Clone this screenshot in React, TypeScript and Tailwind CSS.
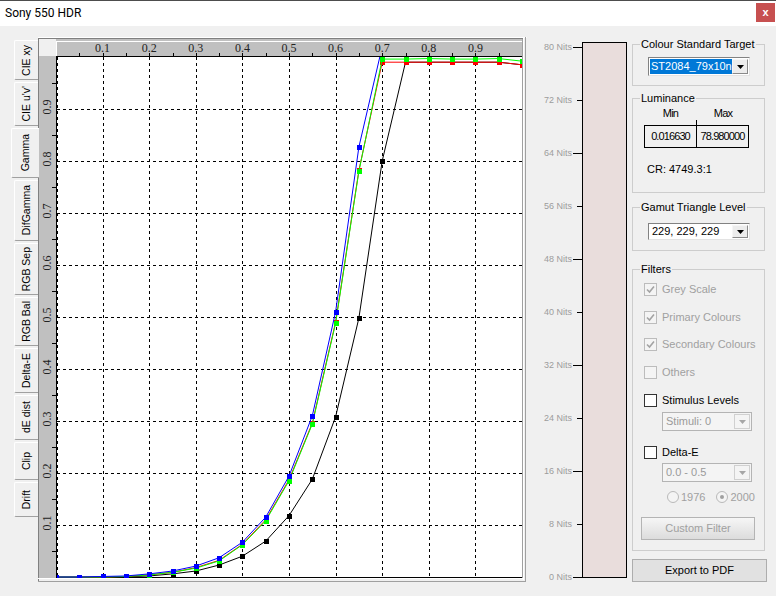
import React from "react";

// Gamma tab of the HDR profiling window

const XS = Array.from({ length: 21 }, (_, i) => i * 0.05);

const BLACK = [0, 0, 0, 0.0005, 0.002, 0.006, 0.0115, 0.023, 0.04, 0.069, 0.118, 0.188, 0.308, 0.498, 0.8, 0.99, 0.99, 0.99, 0.99, 0.99, 0.985];
const RED = [0, 0, 0, 0.001, 0.004, 0.009, 0.018, 0.032, 0.063, 0.11, 0.187, 0.296, 0.49, 0.782, 0.99, 0.99, 0.99, 0.99, 0.99, 0.99, 0.985];
const GREEN = [0, 0, 0, 0.001, 0.004, 0.009, 0.017, 0.031, 0.062, 0.108, 0.185, 0.294, 0.488, 0.78, 0.996, 0.996, 0.997, 0.996, 0.996, 0.997, 0.992];
const BLUE = [0, 0, 0.001, 0.002, 0.006, 0.0115, 0.021, 0.037, 0.067, 0.115, 0.194, 0.31, 0.51, 0.827, 1.02, 1.02, 1.02, 1.02, 1.02, 1.02, 1.02];

const SERIES = [
  { color: "#000000", ys: BLACK },
  { color: "#ff0000", ys: RED },
  { color: "#00ff00", ys: GREEN },
  { color: "#0000ff", ys: BLUE },
];

const MAJORS = [0.1, 0.2, 0.3, 0.4, 0.5, 0.6, 0.7, 0.8, 0.9];
const MINORS = [0.05, 0.15, 0.25, 0.35, 0.45, 0.55, 0.65, 0.75, 0.85, 0.95];

const px = (v: number) => 56 + v * 466;
const py = (v: number) => 577 - v * 520;
const crisp = (n: number) => Math.round(n) + 0.5;

const TABS = [
  { label: "CIE xy", cls: "h-[40px]" },
  { label: "CIE u'v'", cls: "h-[44px]" },
  { label: "Gamma", cls: "h-[50px]", active: true },
  { label: "DifGamma", cls: "h-[61px]" },
  { label: "RGB Sep", cls: "h-[52px]" },
  { label: "RGB Bal", cls: "h-[49px]" },
  { label: "Delta-E", cls: "h-[45px]" },
  { label: "dE dist", cls: "h-[45px]" },
  { label: "Clip", cls: "h-[38px]" },
  { label: "Drift", cls: "h-[35px]" },
];

const NITS = [80, 72, 64, 56, 48, 40, 32, 24, 16, 8, 0];

function Chart() {
  return (
    <svg width={489} height={546} viewBox="38 37 489 546" className="block shrink-0">
      <defs>
        <clipPath id="plot">
          <rect x={57} y={57} width={465} height={521} />
        </clipPath>
      </defs>

      {/* frame + axis bands */}
      <line x1={38} y1={37.5} x2={527} y2={37.5} stroke="#ffffff" />
      <rect x={39} y={39} width={483} height={539} fill="#c0c0c0" />
      <rect x={39} y={39} width={17} height={17} fill="#f0f0f0" />
      <line x1={38.5} y1={38} x2={38.5} y2={582} stroke="#808080" />
      <line x1={38} y1={38.5} x2={524} y2={38.5} stroke="#808080" />
      <line x1={56} y1={41.5} x2={522} y2={41.5} stroke="#ffffff" />
      <line x1={56.5} y1={41} x2={56.5} y2={56} stroke="#ffffff" />
      <line x1={522.5} y1={39} x2={522.5} y2={579} stroke="#a0a0a0" />
      <line x1={523.5} y1={38} x2={523.5} y2={580} stroke="#ffffff" />
      <line x1={525.5} y1={37} x2={525.5} y2={582} stroke="#a0a0a0" />
      <line x1={38} y1={578.5} x2={523} y2={578.5} stroke="#ffffff" />
      <line x1={38} y1={581.5} x2={526} y2={581.5} stroke="#a0a0a0" />

      {/* plot area */}
      <rect x={57} y={57} width={465} height={521} fill="#ffffff" />

      {/* dashed grid */}
      {MAJORS.map((v) => (
        <line key={`gx${v}`} x1={crisp(px(v))} y1={57} x2={crisp(px(v))} y2={577} stroke="#000" strokeDasharray="3 3" />
      ))}
      {MAJORS.map((v) => (
        <line key={`gy${v}`} x1={57} y1={crisp(py(v))} x2={522} y2={crisp(py(v))} stroke="#000" strokeDasharray="3 3" />
      ))}
      <line x1={57.5} y1={57} x2={57.5} y2={577} stroke="#000" strokeDasharray="3 3" />

      {/* axes */}
      <line x1={56} y1={56.5} x2={522} y2={56.5} stroke="#000" />
      <line x1={56.5} y1={56} x2={56.5} y2={578} stroke="#000" />
      <line x1={56} y1={577.5} x2={522} y2={577.5} stroke="#000" />

      {/* ticks */}
      {[...MAJORS, ...MINORS].map((v) => (
        <line key={`tx${v}`} x1={crisp(px(v))} y1={53} x2={crisp(px(v))} y2={56} stroke="#000" />
      ))}
      {MINORS.map((v) => (
        <line key={`ty${v}`} x1={52} y1={crisp(py(v))} x2={56} y2={crisp(py(v))} stroke="#000" />
      ))}

      {/* labels */}
      {MAJORS.map((v) => (
        <text
          key={`lx${v}`}
          x={px(v)}
          y={51.5}
          textAnchor="middle"
          fontFamily="'Liberation Serif', serif"
          fontSize={12}
          fill="#222"
        >
          {v.toFixed(1)}
        </text>
      ))}
      {MAJORS.map((v) => {
        const cx = 47;
        const cy = py(v) - 2;
        return (
          <text
            key={`ly${v}`}
            x={cx}
            y={cy + 4}
            textAnchor="middle"
            fontFamily="'Liberation Serif', serif"
            fontSize={12}
            fill="#222"
            transform={`rotate(-90 ${cx} ${cy})`}
          >
            {v.toFixed(1)}
          </text>
        );
      })}

      {/* curves */}
      <g clipPath="url(#plot)">
        {SERIES.map((s) => (
          <g key={s.color}>
            <polyline
              points={XS.map((x, i) => `${px(x)},${py(s.ys[i])}`).join(" ")}
              fill="none"
              stroke={s.color}
              strokeWidth={1}
            />
            {XS.map((x, i) => (
              <rect
                key={i}
                x={Math.round(px(x)) - 2}
                y={Math.round(py(s.ys[i])) - 2}
                width={5}
                height={5}
                fill={s.color}
              />
            ))}
          </g>
        ))}
      </g>
    </svg>
  );
}

function Arrow({ disabled }: { disabled?: boolean }) {
  return (
    <svg width="7" height="4" viewBox="0 0 7 4">
      <path d="M0 0h7L3.5 4z" fill={disabled ? "#a6a6a6" : "#000"} />
    </svg>
  );
}

function Combo({ text, cls, highlight, disabled }: { text: string; cls: string; highlight?: boolean; disabled?: boolean }) {
  return (
    <div
      className={`flex items-stretch border p-[1px] ${
        disabled ? "border-[#b4b4b4] bg-[#f4f4f4] text-[#9a9a9a]" : "border-t-[#828282] border-l-[#828282] border-r-[#e3e3e3] border-b-[#e3e3e3] bg-white text-black"
      } ${cls}`}
    >
      <div className="flex-1 min-w-0 flex items-center whitespace-nowrap">
        {highlight ? (
          <span className="w-full h-full flex items-center bg-[#0078d7] text-white pl-[1px]">{text}</span>
        ) : (
          <span className="pl-[2px]">{text}</span>
        )}
      </div>
      <div
        className={`w-[16px] shrink-0 flex items-center justify-center border ${
          disabled ? "border-[#d0d0d0] bg-[#f4f4f4]" : "border-t-[#f6f6f6] border-l-[#f6f6f6] border-r-[#8a8a8a] border-b-[#8a8a8a] bg-[#ececec]"
        }`}
      >
        <Arrow disabled={disabled} />
      </div>
    </div>
  );
}

function Box({ checked, disabled }: { checked?: boolean; disabled?: boolean }) {
  return (
    <div
      className={`w-[13px] h-[13px] shrink-0 border flex items-center justify-center ${
        disabled ? "border-[#bcbcbc] bg-[#f4f4f4]" : "border-[#333333] bg-white"
      }`}
    >
      {checked && (
        <svg width="9" height="9" viewBox="0 0 9 9">
          <path d="M1 4.5l2.5 2.5L8 1.5" fill="none" stroke={disabled ? "#a3a3a3" : "#000"} strokeWidth="1.6" />
        </svg>
      )}
    </div>
  );
}

function CheckRow({ label, checked, disabled, cls }: { label: string; checked?: boolean; disabled?: boolean; cls: string }) {
  return (
    <div className={`flex items-center h-[14px] ml-[11px] ${cls}`}>
      <Box checked={checked} disabled={disabled} />
      <span className={`ml-[5px] ${disabled ? "text-[#a0a0a0]" : "text-black"}`}>{label}</span>
    </div>
  );
}

function Radio({ checked }: { checked?: boolean }) {
  return (
    <div className="w-[12px] h-[12px] rounded-full border border-[#b9b9b9] bg-[#f4f4f4] flex items-center justify-center">
      {checked && <div className="w-[4px] h-[4px] rounded-full bg-[#a0a0a0]" />}
    </div>
  );
}

function Group({ title, cls, children }: { title: string; cls: string; children?: React.ReactNode }) {
  return (
    <div className={`border border-[#cdcdcd] ${cls}`}>
      <div className="-mt-[7px] ml-[7px] w-fit px-[1px] bg-[#f0f0f0] h-[13px] leading-[13px]">{title}</div>
      {children}
    </div>
  );
}

export default function App() {
  return (
    <div className="w-[776px] h-[596px] overflow-hidden flex flex-col bg-[#f0f0f0] border-t border-[#4d4d4d] text-[11px] text-black [font-family:'Liberation_Sans',Arial,sans-serif]">
      {/* title bar */}
      <div className="h-[25px] shrink-0 bg-white flex items-start justify-between">
        <span className="pl-[5px] mt-[5px] text-[12px] leading-[15px] [font-family:Roboto,'Liberation_Sans',sans-serif]">
          Sony 550 HDR
        </span>
        <div className="mt-[2px] mr-[1px] w-[19px] h-[19px] bg-[#c75050] flex items-center justify-center text-white font-bold text-[11px] leading-none">
          x
        </div>
      </div>

      <div className="flex flex-1 min-h-0">
        {/* vertical tabs */}
        <div className="w-[38px] shrink-0 pt-[14px] flex flex-col items-end gap-[2px]">
          {TABS.map((t) =>
            t.active ? (
              <div
                key={t.label}
                className={`relative z-10 -mr-[1px] w-[28px] ${t.cls} bg-[#f0f0f0] border-l border-t border-b border-l-white border-t-white border-b-[#a0a0a0] rounded-l-[2px] flex items-center justify-center`}
              >
                <span className="[writing-mode:vertical-rl] rotate-180 text-[10.5px] leading-none">{t.label}</span>
              </div>
            ) : (
              <div
                key={t.label}
                className={`w-[24px] ${t.cls} bg-[#f0f0f0] border-l border-t border-b border-l-white border-t-white border-b-[#a0a0a0] rounded-l-[2px] flex items-center justify-center`}
              >
                <span className="[writing-mode:vertical-rl] rotate-180 text-[10.5px] leading-none">{t.label}</span>
              </div>
            )
          )}
        </div>

        {/* chart page */}
        <div className="mt-[11px]">
          <Chart />
        </div>

        {/* nits scale */}
        <div className="w-[105px] shrink-0 pt-[16px] flex items-start">
          <div className="w-[55px] h-[541px] flex flex-col justify-between">
            {NITS.map((n, i) => (
              <div key={n} className="h-[11px] flex items-center justify-end">
                <span className="text-[9px] leading-[11px] text-[#9c9c9c]">{n} Nits</span>
                <div className="w-[10px] flex justify-end">
                  <div className={i % 2 === 0 ? "w-[9px] h-px bg-black" : "w-[5px] h-px bg-black"} />
                </div>
              </div>
            ))}
          </div>
          <div className="w-[45px] h-[536px] border border-black bg-[#e9dddc]" />
        </div>

        {/* right panel */}
        <div className="w-[134px] shrink-0 pt-[18px] flex flex-col">
          <Group title="Colour Standard Target" cls="w-[133px] h-[42px]">
            <div className="mt-[6px] ml-[15px]">
              <Combo text="ST2084_79x10ni" cls="w-[102px] h-[19px]" highlight />
            </div>
          </Group>

          <Group title="Luminance" cls="mt-[12px] w-[133px] h-[95px]">
            <div className="ml-[11px] w-[105px]">
              <div className="mt-[2px] h-[13px] flex leading-[13px] tracking-[-0.8px]">
                <div className="w-[53px] text-center">Min</div>
                <div className="flex-1 text-center">Max</div>
              </div>
              <div className="h-[5px] flex">
                <div className="w-[53px] border-r border-black" />
              </div>
              <div className="h-[23px] border border-black flex tracking-[-0.9px]">
                <div className="w-[52px] border-r border-black flex items-center justify-center">0.016630</div>
                <div className="flex-1 flex items-center justify-center">78.980000</div>
              </div>
            </div>
            <div className="mt-[15px] ml-[14px] h-[13px] leading-[13px]">CR: 4749.3:1</div>
          </Group>

          <Group title="Gamut Triangle Level" cls="mt-[14px] w-[133px] h-[44px]">
            <div className="mt-[9px] ml-[15px]">
              <Combo text="229, 229, 229" cls="w-[102px] h-[17px]" />
            </div>
          </Group>

          <Group title="Filters" cls="mt-[18px] w-[133px] h-[282px]">
            <CheckRow label="Grey Scale" checked disabled cls="mt-[6px]" />
            <CheckRow label="Primary Colours" checked disabled cls="mt-[14px]" />
            <CheckRow label="Secondary Colours" checked disabled cls="mt-[13px]" />
            <CheckRow label="Others" disabled cls="mt-[14px]" />
            <CheckRow label="Stimulus Levels" cls="mt-[14px]" />
            <div className="mt-[5px] ml-[29px]">
              <Combo text="Stimuli: 0" cls="w-[90px] h-[19px]" disabled />
            </div>
            <CheckRow label="Delta-E" cls="mt-[14px]" />
            <div className="mt-[4px] ml-[29px]">
              <Combo text="0.0 - 0.5" cls="w-[90px] h-[19px]" disabled />
            </div>
            <div className="mt-[8px] ml-[34px] h-[14px] flex items-center text-[#a0a0a0]">
              <Radio />
              <span className="ml-[2px]">1976</span>
              <div className="ml-[11px]">
                <Radio checked />
              </div>
              <span className="ml-[2px]">2000</span>
            </div>
            <button className="mt-[13px] ml-[8px] w-[114px] h-[23px] border border-[#b4b4b4] bg-gradient-to-b from-[#f6f6f6] to-[#dcdcdc] text-[#a0a0a0] flex items-center justify-center">
              Custom Filter
            </button>
          </Group>

          <button className="mt-[8px] w-[135px] h-[23px] border border-[#adadad] bg-[#e1e1e1] flex items-center justify-center">
            Export to PDF
          </button>
        </div>
      </div>
    </div>
  );
}
